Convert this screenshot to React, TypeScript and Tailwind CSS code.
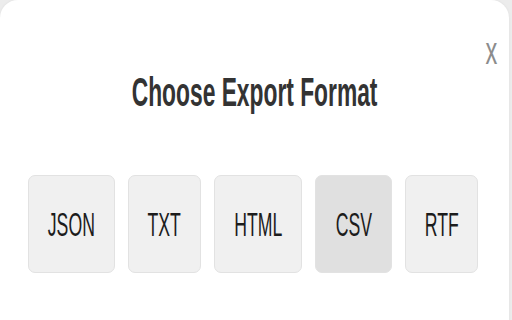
const formats = [
  { label: 'JSON', width: 'w-[87px]', active: false },
  { label: 'TXT', width: 'w-[73px]', active: false },
  { label: 'HTML', width: 'w-[88px]', active: false },
  { label: 'CSV', width: 'w-[77px]', active: true },
  { label: 'RTF', width: 'w-[73px]', active: false },
];

export default function App() {
  return (
    <div className="h-[320px] w-[512px] overflow-hidden bg-[#ececec] font-['Liberation_Sans',Arial,sans-serif]">
      <div className="relative h-[340px] w-[509px] rounded-[18px] bg-white pt-[72px] shadow-[0_0_3px_rgba(0,0,0,0.06)]">
        <button className="absolute right-[9px] top-[32px] flex h-[38px] w-[18px] items-center justify-center text-[38px] leading-none text-[#8c8c8c]">
          <span className="inline-block scale-x-[0.62]">x</span>
        </button>

        <h2 className="h-[40px] text-center text-[40px] font-bold leading-[40px] text-[#333333]">
          <span className="inline-block scale-x-[0.57] whitespace-nowrap">Choose Export Format</span>
        </h2>

        <div className="mt-[63px] flex justify-center gap-[13px] pr-[3px]">
          {formats.map((f) => (
            <button
              key={f.label}
              className={`flex h-[98px] ${f.width} items-center justify-center rounded-[7px] border border-[#e2e2e2] ${
                f.active ? 'bg-[#e0e0e0]' : 'bg-[#f0f0f0]'
              } text-[34px] leading-none text-[#1c1c1c]`}
            >
              <span className="inline-block scale-x-[0.52] whitespace-nowrap">{f.label}</span>
            </button>
          ))}
        </div>
      </div>
    </div>
  );
}
